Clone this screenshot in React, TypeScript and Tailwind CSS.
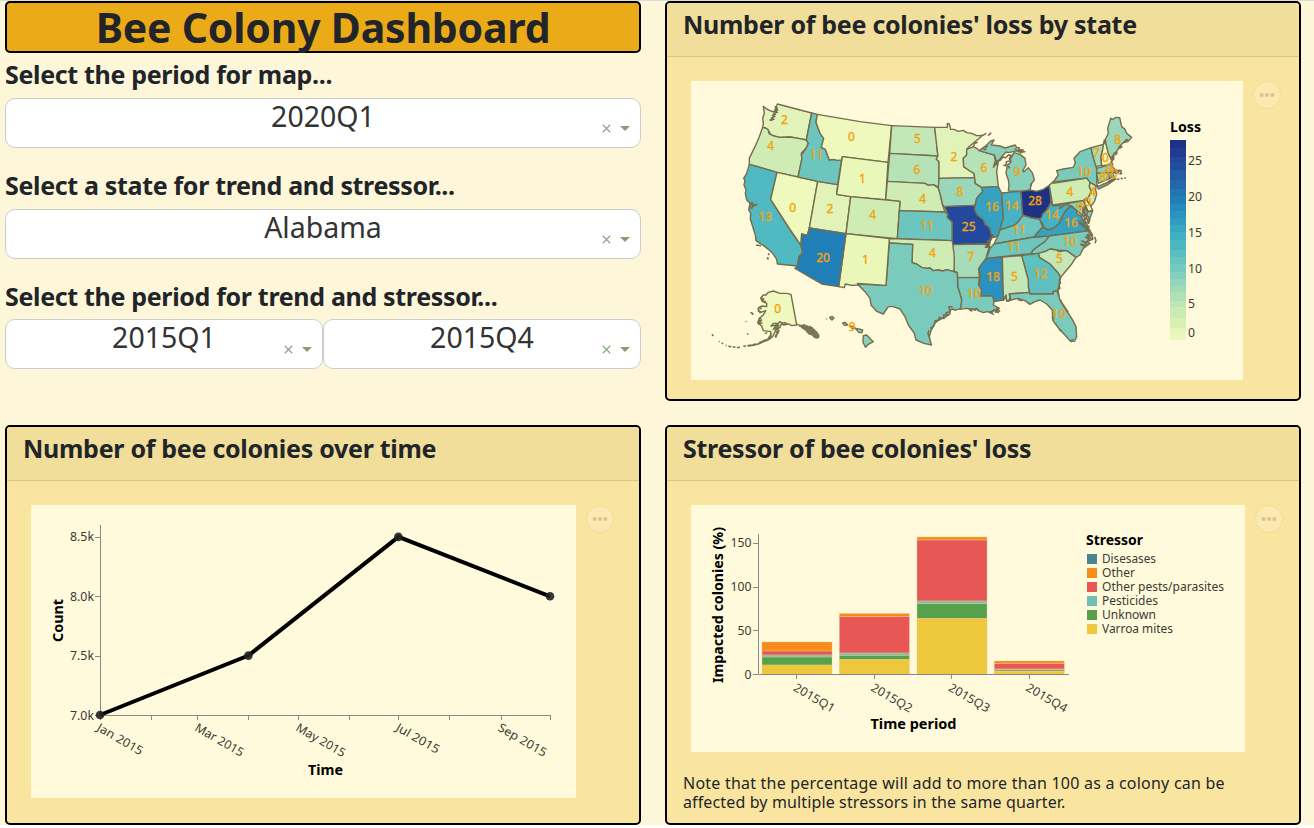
import React from 'react';

const FONT = "font-['Noto_Sans','Open_Sans',sans-serif]";

const SHADES: Record<number, string> = {
  0: '#eff9bd', 1: '#e9f7b9', 2: '#e1f3b8', 4: '#cfecb5', 5: '#c3e7b6', 6: '#b6e2b8', 7: '#a8dcb9', 8: '#9ad7ba',
  9: '#89d0bb', 10: '#7bcbbc', 11: '#6cc5be', 12: '#5fc0c0', 13: '#51b9c2', 14: '#45b3c3', 16: '#35a2c2',
  18: '#2a91c0', 20: '#217fb8', 25: '#23499f', 28: '#1d3185',
};

type Region = [name: string, loss: number, points: string, labelX: number, labelY: number];

const REGIONS: Region[] = [
  ['WA', 2, '190,49 200,57 210,62 222,66 226,58 232,42 335,69 319,150 295,145 270,141 240,142 212,136 208,125 196,114 188,112 190,100 188,85 193,70', 253, 90],
  ['OR', 4, '188,112 196,114 204,118 207,131 222,138 240,142 270,141 295,145 319,150 325,160 318,175 304,190 306,205 294,261 231,247 148,223 148,205 155,190 165,170 178,140', 212, 168],
  ['CA', 13, '148,223 231,247 212,328 269,417 303,466 308,488 297,500 292,528 232,522 230,508 218,490 205,478 195,470 180,460 168,452 166,435 155,400 151,388 152,370 146,360 150,340 140,330 136,310 138,300 132,285 135,272 131,265 140,250', 195, 381],
  ['NV', 0, '231,247 353,274 328,414 322,436 305,432 303,466 269,417 212,328', 278, 354],
  ['UT', 2, '353,274 413,284 410,313 452,320 438,431 328,414', 390, 357],
  ['ID', 11, '335,69 352,73 348,97 360,130 371,145 364,172 376,178 388,210 400,208 414,211 425,208 413,284 353,274 294,261 306,205 304,195 318,175 325,160 319,150', 349, 196],
  ['MT', 0, '352,73 480,95 575,107 564,217 427,200 425,210 414,211 400,208 388,210 376,178 364,172 371,145 360,130 348,97', 454, 141],
  ['WY', 1, '427,200 564,217 557,329 452,320 410,313', 487, 267],
  ['ND', 5, '575,107 704,112 706,130 710,150 711,175 714,198 569,190', 652, 147],
  ['SD', 6, '569,190 714,198 709,207 717,215 717,292 700,284 685,286 675,280 562,274', 651, 240],
  ['NE', 4, '562,274 675,280 685,286 700,284 715,294 720,310 728,345 735,366 598,362 600,334 557,329', 668, 327],
  ['CO', 4, '452,320 600,334 592,446 438,431', 518, 376],
  ['KS', 11, '598,362 735,366 744,374 742,382 757,397 757,452 592,446', 681, 408],
  ['MN', 2, '704,112 742,112 742,100 748,102 752,118 762,118 775,124 790,121 800,128 815,130 830,137 848,136 825,155 805,172 800,178 800,195 790,205 791,230 810,243 822,250 824,263 717,265 717,215 709,207 714,198 711,175', 762, 202],
  ['IA', 8, '717,265 824,263 826,280 845,292 848,305 838,315 830,325 825,346 733,350 728,345 720,310 715,294', 780, 306],
  ['MO', 25, '733,350 825,346 824,360 832,375 851,390 855,402 870,415 873,430 878,440 870,455 868,472 858,472 860,462 757,464 757,397 742,382 744,374', 806, 411],
  ['WI', 6, '800,178 820,170 830,175 838,182 865,190 883,195 886,215 880,232 895,215 890,245 895,290 845,292 826,280 824,263 822,250 810,243 791,230 790,205 800,195', 852, 235],
  ['MI upper', 9, '838,182 860,165 872,153 882,150 874,165 900,168 915,174 945,165 950,172 958,173 956,180 970,180 940,185 925,188 918,186 905,200 898,210 892,222 883,195 865,190', 0, 0],
  ['MI', 9, '942,188 960,193 975,205 978,225 968,243 972,245 985,233 998,250 1003,270 995,280 990,300 963,304 925,303 927,285 925,270 918,250 922,225 932,218 932,205', 951, 246],
  ['IL', 16, '845,292 895,290 905,309 910,385 905,400 900,420 894,438 880,443 873,430 870,415 855,402 851,390 832,375 824,360 825,346 830,325 838,315 848,305', 876, 351],
  ['IN', 14, '905,309 963,304 968,377 955,395 945,405 930,410 915,415 900,420 905,400 910,385', 935, 348],
  ['OH', 28, '963,304 990,300 1010,304 1030,298 1048,286 1053,335 1048,348 1040,360 1028,372 1025,385 1010,385 995,384 985,380 975,378 968,375', 1005, 333],
  ['KY', 11, '968,377 980,379 995,384 1018,387 1022,395 1028,412 1015,425 1003,441 882,462 887,452 894,438 900,420 915,415 930,410 945,405 955,395', 958, 420],
  ['TN', 11, '882,462 1003,441 1048,438 1046,445 1035,455 1020,465 1000,480 993,491 858,505 865,490 870,475', 942, 472],
  ['WV', 14, '1053,335 1058,348 1082,345 1080,355 1095,343 1115,346 1108,352 1098,362 1092,370 1085,385 1078,400 1065,412 1045,420 1035,415 1027,400 1018,387 1025,382 1028,372 1040,360 1048,348', 1056, 376],
  ['VA', 16, '1115,350 1130,362 1132,372 1145,380 1148,392 1160,398 1162,410 1170,422 1045,438 1003,441 1015,425 1028,412 1035,415 1045,420 1065,412 1078,400 1085,385 1092,370 1098,362 1108,352', 1113, 400],
  ['MD', 9, '1082,345 1150,331 1165,365 1178,362 1172,378 1165,400 1155,370 1152,350 1148,378 1135,365 1115,348 1095,343', 1139, 350],
  ['DE', 0, '1150,331 1158,326 1170,345 1178,360 1165,365', 1163, 336],
  ['PA', 4, '1048,286 1058,276 1060,280 1160,264 1170,275 1168,290 1175,305 1165,322 1150,331 1058,345', 1110, 306],
  ['NJ', 4, '1170,277 1188,285 1187,300 1190,313 1183,335 1173,348 1160,330 1175,305 1168,290', 1178, 306],
  ['NY', 10, '1060,276 1075,255 1070,242 1090,237 1120,232 1126,218 1122,205 1140,185 1173,173 1178,195 1185,220 1190,235 1190,275 1192,290 1170,277 1160,264', 1151, 246],
  ['NY island', 10, '1192,290 1205,285 1240,270 1225,283 1195,297', 0, 0],
  ['VT', 7, '1173,173 1210,163 1208,180 1203,200 1205,226 1188,230 1185,220 1178,195', 1189, 189],
  ['NH', 0, '1210,163 1213,150 1218,160 1225,190 1236,213 1228,224 1205,228 1203,200 1208,180', 1216, 204],
  ['ME', 8, '1215,150 1225,130 1223,115 1232,85 1240,88 1247,82 1259,83 1265,110 1275,118 1280,130 1295,142 1283,155 1270,158 1260,167 1250,185 1242,190 1237,213 1225,190', 1253, 150],
  ['MA', 9, '1190,235 1230,224 1238,220 1237,230 1247,240 1258,243 1252,250 1240,247 1190,250', 1228, 235],
  ['CT', 8, '1190,250 1225,247 1228,266 1195,280', 1208, 260],
  ['RI', 10, '1225,247 1237,247 1242,258 1228,266', 1232, 252],
  ['NC', 10, '1048,438 1170,422 1178,435 1165,440 1178,448 1160,455 1170,460 1150,475 1140,495 1128,502 1100,482 1070,480 1050,477 1035,485 1015,490 993,491 1000,480 1020,465 1035,455', 1109, 457],
  ['SC', 5, '1015,490 1035,485 1050,477 1070,480 1076,485 1100,482 1128,502 1115,522 1100,540 1082,562 1075,550 1050,522 1018,502', 1078, 508],
  ['GA', 12, '965,497 1015,490 1018,502 1050,522 1075,550 1082,562 1076,590 1072,603 1060,604 1060,612 990,612 985,590 985,570', 1021, 552],
  ['AL', 5, '907,501 965,497 985,570 985,590 988,607 928,612 932,630 920,633 918,620 910,630', 943, 561],
  ['MS', 18, '858,505 907,501 907,580 911,630 882,635 878,618 840,618 845,600 836,585 842,560 836,535 848,518', 879, 561],
  ['AR', 7, '757,464 860,462 858,472 868,472 862,490 858,505 848,518 836,535 838,562 773,563 772,547 763,544', 813, 502],
  ['LA', 10, '773,563 838,562 836,585 845,600 840,618 878,618 882,635 880,645 898,655 890,655 895,668 880,660 875,670 862,665 850,668 835,662 830,655 820,658 800,655 780,658 785,630 778,605 773,590', 821, 612],
  ['OK', 4, '568,446 757,452 763,500 762,545 740,539 728,543 715,540 700,542 690,534 680,535 665,532 650,522 636,518 638,463 568,459', 697, 489],
  ['TX', 10, '568,459 638,463 636,518 650,522 665,532 680,535 690,534 700,542 715,540 728,543 740,539 762,545 772,549 773,590 778,605 785,630 782,655 765,661 760,657 750,660 750,672 735,682 715,690 705,700 693,722 688,740 694,765 672,760 648,750 643,730 625,705 615,680 600,657 580,650 565,650 558,660 550,672 530,664 513,645 510,625 495,605 472,582 558,586', 676, 603],
  ['NM', 1, '438,431 568,446 558,586 472,580 475,585 455,586 436,582 433,593 416,590', 496, 510],
  ['AZ', 20, '328,414 438,431 416,590 365,582 285,535 292,528 297,500 308,488 303,466 305,432 322,436', 369, 505],
  ['FL', 10, '928,612 988,607 990,612 1060,612 1060,604 1072,603 1080,630 1095,655 1115,685 1128,710 1130,740 1124,753 1112,755 1095,735 1080,720 1065,700 1058,690 1057,660 1040,642 1020,630 1005,635 990,643 975,632 955,625 932,630', 1076, 672],
  ['AK', 0, '182,624 190,615 198,615 205,607 220,603 240,610 260,610 273,613 290,705 275,707 265,702 250,705 245,700 240,712 228,720 218,740 200,752 212,735 212,725 190,722 185,708 173,698 178,685 190,675 197,662 180,668 174,656 188,648 200,650 200,640 188,635', 233, 658],
  ['HI big', 9, '490,737 500,735 512,748 520,755 505,763 497,772 489,757', 456, 712],
  ['HI Kauai', 9, '389,683 396,679 402,684 396,690', 0, 0],
  ['HI Oahu', 9, '428,699 435,697 443,705 434,706', 0, 0],
  ['HI Molokai', 9, '450,708 462,710 466,716 455,714', 0, 0],
  ['HI Maui', 9, '466,715 473,716 488,720 486,728 477,728', 0, 0],
];

const ISLETS = [
  'M224 49l8 5-6 3 7 3-8 3 7 4-11 3 5 3-9 3 8 3-11 5 8 4-12 2 7 2',
  'M150 340l8-2-4 6 17 0-12 4-4 8-6-10',
  'M168 466l8 0 7 2M207 490l-2 6M201 502l3 5 0-5',
  'M820 168l4-7 9-5M847 137l12-7M864 137l5-5 5-3M863 167l-8 8M848 177l11 2',
  'M882 223l7-10 12-2 8-10 8 2 8-8 9 1-6 9 3 8-12 2-1 12-8-2m34-49l10 7 12-2-11 5 20-1-15 4',
  'M995 280l-5 7m-65-60l4 8',
  'M1218 151l-4 12m26 32l-5 7 7-1-6 9 7-4m10-17l-8 6 7-8m15-18l-8 6 5-9m20-16l-13 8 9-10-5 9m-35 85l8-3-4 9 12 0m0-8l8 3-4 9 7-2m-28 9l7 6m5 3l7-1m10 0l-6-3m11-1l5 2m-54 10l16-8-9 11 18-12',
  'M1137 347l12 9 1 12 8 7-9 3 10 9-8 0 8 13-9-8 4 19-11-13-8-2 9 8 7 6 8 2 4 8-8-2m4-72l-4 8 8 12-3 9 8 9-2 16 4-12m-1 23l-9-5 6 13-8-3 8 6',
  'M1162 422l10 10 7 13-5 4m-4-13l-9-2 7 10-12-3 11 8-8 8-14-4 15 8-5 4-13-2 11 7M1184 440l4 12-3 8',
  'M1082 562l-5 9 5 8-5 5 3 11-6 4 3 20-4-12m7 21l8 14 7 10 9 14-6-3M1056 680l6 8M1064 700l6 4M1078 718l8 6M1120 748l-8 3',
  'M910 630l8-15 2 17 7 1 3-14 2 14m21-4l15 3M868 665l13-1m7-3l-9-1m-3 10l6 4m2-7l9-2m-8-6l10 0 5 6m-64-2l-6-7-5 5-10-5-7 3 9 5',
  'M758 650l-11 0 3 15-12 3 6 8-13-2 1 12-14-4-1 9-12 1-3 15-11 9m-4 5l-3 10 5 14',
  'M873 430l8 8m-9 3l-2 15-8-5 5 22m-13-2l15-2',
  'M183 624l8 3-6 5 13 3m-13 22l-8-5 9-4m-3 18l-10-4m3 24l8-1m-10 9l11-4-10 11 12-2m15 29l-8 3m29-33l-10 10 17-3-10 13 18-14m-13-5l7 3 8-7 6 5 9-2 6 4',
  'M224 720l12-9-3 10m1 4l-8 14 8-10-5-3 8-4-6 11-4 10',
  'M198 748l-12 7-8 1M184 757l-14 6M168 762l-10 2M154 765l-12 2M138 768l-8 1M120 772l-9 1M106 771l-8 0M94 770l-9-1M80 767l-3-1M69 762l-4-4M59 755l-3-1M40 738l-4-5M143 732l-1-2M139 696l-2-2M151 667l5 2 4 3M155 673l5 0M143 734l0-2',
  'M213 729l-2 17-18 8-15 7-17 5-17 2',
  'M378 688l2-2',
];

const PANHANDLE = '292,703 302,706 312,704 322,708 333,710 342,718 350,726 358,737 354,745 345,744 337,736 325,731 318,722 308,715';

function LossMap() {
  return (
    <svg className="block h-[299px] w-[552px] bg-[#fffadc]" viewBox="691 81 552 299">
      <g transform="translate(700 90) scale(.33333)" stroke="#756d4c" strokeWidth="4.2" strokeLinejoin="round">
        {REGIONS.map(([name, loss, points]) => (
          <polygon key={name} points={points} fill={SHADES[loss]} />
        ))}
        <polygon points={PANHANDLE} fill="#7d7655" strokeWidth="3.5" strokeDasharray="7 2" />
        {ISLETS.map((d) => (
          <path key={d} d={d} fill="none" strokeWidth="4.4" />
        ))}
      </g>
      <g fill="#f5a30a" fontSize="12" textAnchor="middle">
        {REGIONS.filter((r) => r[3] > 0).map(([name, loss, , x, y]) => (
          <text key={name} x={700 + x / 3} y={90 + y / 3 + 4} stroke="#f5a30a" strokeWidth=".35">{loss}</text>
        ))}
      </g>
      <text x="1170" y="131.500" fontSize="14" fontWeight="700" textLength="31" lengthAdjust="spacingAndGlyphs">Loss</text>
      {LEGEND.map(([color, top, bottom]) => (
        <rect key={top} x="1170" y={top} width="16" height={bottom - top} fill={color} shapeRendering="crispEdges" />
      ))}
      {[[25, 165], [20, 201], [15, 237], [10, 273], [5, 308], [0, 337]].map(([v, y]) => (
        <text key={v} x="1188" y={y} fontSize="12" fill="#3c3a33" textLength={v > 9 ? 14 : 7} lengthAdjust="spacingAndGlyphs">{v}</text>
      ))}
    </svg>
  );
}

const LEGEND: [string, number, number][] = [
  ['#1f3386', 140, 148], ['#213b90', 148, 157], ['#22479b', 157, 162], ['#234e9f', 162, 170], ['#235ba5', 170, 180],
  ['#2468ac', 180, 189], ['#2276b4', 189, 196], ['#217fb7', 196, 204], ['#258abc', 204, 211], ['#2994bf', 211, 218],
  ['#309dc1', 218, 225], ['#37a6c2', 225, 232], ['#42b0c3', 232, 240], ['#4cb7c3', 240, 250], ['#5bbec1', 250, 257],
  ['#69c4bf', 257, 264], ['#76c9bd', 264, 272], ['#84cfbc', 272, 279], ['#94d5bb', 279, 286], ['#a2dab9', 286, 292],
  ['#b0dfb8', 292, 301], ['#bfe5b6', 301, 307], ['#cbeab4', 307, 318], ['#d9f0b4', 318, 328], ['#e6f5b7', 328, 333], ['#ecf8bb', 333, 340],
];

const MONTH_TICKS = [100.5, 151.5, 197.5, 248.5, 298.5, 349.5, 398.5, 449.5, 501.5, 550.5];
const POINTS = [[100, 715], [248.4, 655.6], [398.4, 536.9], [550, 596.300]];

function TrendChart() {
  return (
    <svg className="block h-[293px] w-[545px] bg-[#fffadc]" viewBox="31 505 545 293">
      <path
        d={'M100.500 525V715.500H551' + MONTH_TICKS.map((x) => `M${x} 715v5`).join('') + [537.5, 596.5, 656.5, 715.5].map((y) => `M95 ${y}h5`).join('')}
        stroke="#888" fill="none"
      />
      {[['8.5k', 541], ['8.0k', 600.5], ['7.5k', 660], ['7.0k', 719.5]].map(([t, y]) => (
        <text key={t} x="94" y={y} fontSize="12" textAnchor="end" fill="#3c3a33" textLength="24" lengthAdjust="spacingAndGlyphs">{t}</text>
      ))}
      {([['Jan 2015', 96, 730, 51], ['Mar 2015', 194, 730, 54], ['May 2015', 295, 730, 55], ['Jul 2015', 395, 730, 48], ['Sep 2015', 497, 730, 54]] as const).map(([t, x, y, w]) => (
        <text key={t} transform={`translate(${x} ${y}) rotate(30)`} fontSize="12" fill="#3c3a33" textLength={w} lengthAdjust="spacingAndGlyphs">{t}</text>
      ))}
      <polyline points={POINTS.map((p) => p.join(',')).join(' ')} fill="none" stroke="#000" strokeWidth="4" />
      {POINTS.map(([x, y]) => <circle key={x} cx={x} cy={y} r="4.300" fill="#222" fillOpacity=".9" />)}
      <text x="325.500" y="775" fontSize="14" fontWeight="700" textAnchor="middle" textLength="35" lengthAdjust="spacingAndGlyphs">Time</text>
      <text transform="translate(62.500 620.500) rotate(-90)" fontSize="14" fontWeight="700" textAnchor="middle" textLength="43" lengthAdjust="spacingAndGlyphs">Count</text>
    </svg>
  );
}

const BARS: [number, [number, number, string][]][] = [
  [762, [[642, 651, '#f58c1b'], [651, 655, '#e65756'], [655, 657, '#70bfb5'], [657, 665, '#56a14c'], [665, 674.5, '#edc83c']]],
  [839.4, [[613.5, 616.5, '#f58c1b'], [616.5, 653, '#e65756'], [653, 655.3, '#70bfb5'], [655.3, 659.5, '#56a14c'], [659.5, 674.5, '#edc83c']]],
  [917, [[537, 540, '#f58c1b'], [540, 601, '#e65756'], [601, 603.5, '#70bfb5'], [603.5, 618.5, '#56a14c'], [618.5, 674.5, '#edc83c']]],
  [994.300, [[661, 663.5, '#f58c1b'], [663.5, 669, '#e65756'], [669, 670, '#a9b38a'], [670, 671.3, '#56a14c'], [671.3, 674.5, '#edc83c']]],
];
const STRESSORS = [
  ['Disesases', '#4c8391', 54], ['Other', '#f58c1b', 33], ['Other pests/parasites', '#e65756', 122],
  ['Pesticides', '#70bfb5', 56], ['Unknown', '#56a14c', 54], ['Varroa mites', '#edc83c', 71],
] as const;

function StressorChart() {
  return (
    <svg className="block h-[247px] w-[554px] bg-[#fffadc]" viewBox="691 505 554 247">
      {BARS.map(([x, parts]) => (
        <g key={x}>
          {parts.map(([a, b, c]) => <rect key={a} x={x} y={a} width="70" height={b - a} fill={c} />)}
          {parts.map(([a, b]) => <rect key={a} x={x} y={a} width="70" height={b - a} fill="none" stroke="#f2c684" strokeOpacity=".45" strokeWidth=".8" />)}
        </g>
      ))}
      <path d="M758.500 534V674.500H1069M753 543.500h5M753 587.500h5M753 630.500h5M753 674.500h5M796.500 674v5M874.500 674v5M951.500 674v5M1029.500 674v5" fill="none" stroke="#888" />
      {[[150, 547, 21], [100, 591, 21], [50, 635, 14], [0, 679, 7]].map(([v, y, w]) => (
        <text key={v} x="751.500" y={y} fontSize="12" textAnchor="end" fill="#3c3a33" textLength={w} lengthAdjust="spacingAndGlyphs">{v}</text>
      ))}
      {['2015Q1', '2015Q2', '2015Q3', '2015Q4'].map((t, i) => (
        <text key={t} transform={`translate(${792.5 + i * 77.5} 690) rotate(30)`} fontSize="12" fill="#3c3a33" textLength="45.500" lengthAdjust="spacingAndGlyphs">{t}</text>
      ))}
      <text x="913.500" y="729" fontSize="14" fontWeight="700" textAnchor="middle" textLength="86" lengthAdjust="spacingAndGlyphs">Time period</text>
      <text transform="translate(723 605) rotate(-90)" fontSize="14" fontWeight="700" textAnchor="middle" textLength="156" lengthAdjust="spacingAndGlyphs">Impacted colonies (%)</text>
      <text x="1086" y="545" fontSize="14" fontWeight="700" textLength="57" lengthAdjust="spacingAndGlyphs">Stressor</text>
      {STRESSORS.map(([t, c, w], i) => (
        <g key={t}>
          <rect x="1087" y={554 + i * 14} width="10" height="10" fill={c} />
          <text x="1102" y={563 + i * 14} fontSize="12" fill="#3c3a33" textLength={w} lengthAdjust="spacingAndGlyphs">{t}</text>
        </g>
      ))}
    </svg>
  );
}

function MenuButton() {
  return (
    <button className="flex h-7 w-7 items-center justify-center rounded-full border border-[#eedd9d] bg-[#fce8b1]">
      <svg className="h-4 w-4" viewBox="0 0 16 16" fill="#d6c68d">
        <circle cx="2.700" cy="8" r="2" /><circle cx="8" cy="8" r="2" /><circle cx="13.300" cy="8" r="2" />
      </svg>
    </button>
  );
}

function Card({ title, children, note }: { title: string; children: React.ReactNode; note?: React.ReactNode }) {
  return (
    <section className="h-[400px] overflow-hidden rounded-[5px] border-2 border-black bg-[#fae5a0]">
      <h2 className="h-[54px] border-b border-[#d6c68c] bg-[#f1de9a] pl-4 text-[25px] leading-[43px] font-bold tracking-[-0.28px] whitespace-nowrap">{title}</h2>
      <div className="flex items-start gap-[10px] pt-6 pl-6">
        {children}
        <MenuButton />
      </div>
      {note}
    </section>
  );
}

function Select({ value }: { value: string }) {
  return (
    <div className="flex h-[50px] flex-1 items-start rounded-[10px] border border-[#ccc] bg-white">
      <span className="flex-1 pl-[38px] text-center text-[28.5px] leading-[34px] text-[#333]">{value}</span>
      <span className="flex w-[38px] items-center gap-[9px] pt-[25px]">
        <svg className="h-[9px] w-[9px]" viewBox="0 0 9 9"><path d="M.8.800l7.400 7.400M8.200.800L.8 8.200" stroke="#8aab85" strokeWidth="1.300" /></svg>
        <svg className="h-[5px] w-[10px]" viewBox="0 0 10 5"><path d="M0 0h10L5 5z" fill="#999574" /></svg>
      </span>
    </div>
  );
}

function Field({ label, gap, children }: { label: string; gap: string; children: React.ReactNode }) {
  return (
    <div className="flex h-[111px] flex-col">
      <p className={`text-[25px] leading-[30px] font-bold tracking-[-0.33px] whitespace-nowrap ${gap}`}>{label}</p>
      <div className="flex">{children}</div>
    </div>
  );
}

export default function App() {
  return (
    <main className={`h-[828px] bg-white text-[#212529] ${FONT}`}>
      <div className="grid h-[825px] grid-cols-[636px_636px] content-start gap-6 border-t border-[#d9dddd] bg-[#fdf6d9] pl-[5px]">
        <div className="flex h-[400px] flex-col">
          <h1 className="mb-[6px] h-[52px] rounded-[5px] border-2 border-black bg-[#ebab18] text-center text-[41px] leading-[49px] font-bold tracking-[-0.2px] whitespace-nowrap">Bee Colony Dashboard</h1>
          <Field label="Select the period for map..." gap="mb-[9px]"><Select value="2020Q1" /></Field>
          <Field label="Select a state for trend and stressor..." gap="mb-[9px]"><Select value="Alabama" /></Field>
          <Field label="Select the period for trend and stressor..." gap="mb-[8px]"><Select value="2015Q1" /><Select value="2015Q4" /></Field>
        </div>
        <Card title="Number of bee colonies' loss by state"><LossMap /></Card>
        <Card title="Number of bee colonies over time"><TrendChart /></Card>
        <Card
          title="Stressor of bee colonies' loss"
          note={
            <p className="mt-[22px] flex flex-col pl-4 text-[16px] leading-[19px] whitespace-nowrap">
              <span className="tracking-[0.22px]">Note that the percentage will add to more than 100 as a colony can be</span>
              <span className="tracking-[0.13px]">affected by multiple stressors in the same quarter.</span>
            </p>
          }
        >
          <StressorChart />
        </Card>
      </div>
    </main>
  );
}
